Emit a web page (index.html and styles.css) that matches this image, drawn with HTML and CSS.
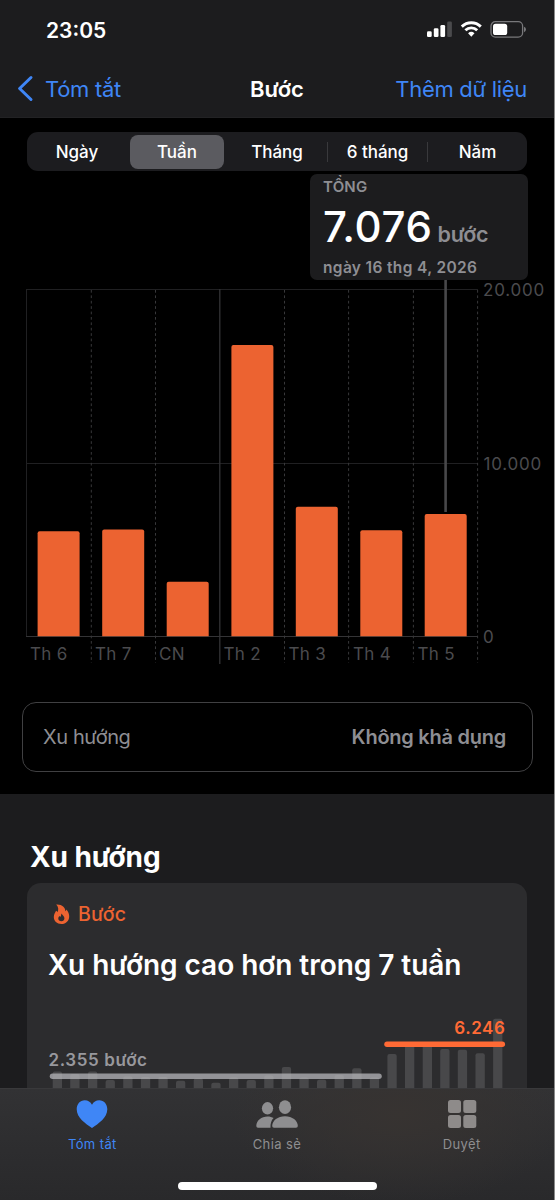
FILE: index.html
```html
<!DOCTYPE html>
<html lang="vi">

<head>
    <meta charset="UTF-8">
    <meta name="viewport" content="width=device-width, initial-scale=1.0">
    <title>Bước</title>
    <link rel="stylesheet" href="styles.css">
</head>

<body>
    <div class="phone">
        <header class="header">
            <!-- Status bar -->
            <div class="status-bar">
                <span class="time">23:05</span>
                <svg class="status-icons" width="100" height="18" viewBox="0 0 100 18">
                    <g fill="#fff">
                        <rect x="0" y="10.3" width="4.7" height="5.7" rx="1.3" />
                        <rect x="6.8" y="7.3" width="4.7" height="8.7" rx="1.3" />
                        <rect x="13.4" y="4" width="4.7" height="12" rx="1.3" />
                        <rect x="20.2" y="0.5" width="4.7" height="15.5" rx="1.3" fill="#4a4a4c" />
                    </g>
                    <g fill="none" stroke="#fff" stroke-width="2.9">
                        <path d="M34.8 5.6a13.7 13.7 0 0 1 19 0" />
                        <path d="M38.4 9.3a8.5 8.5 0 0 1 11.8 0" />
                    </g>
                    <path d="M41.1 12.2a4.8 4.8 0 0 1 6.4 0L44.3 15.8z" fill="#fff" />
                    <rect x="64" y="0.7" width="31.6" height="15.4" rx="4.4" fill="none" stroke="#78787b" stroke-width="1.3" />
                    <rect x="66" y="2.7" width="14.2" height="11.4" rx="2.6" fill="#fff" />
                    <path d="M97 5.8q2 .8 2 2.7t-2 2.7z" fill="#78787b" />
                </svg>
            </div>

            <!-- Navigation -->
            <nav class="nav-bar">
                <a class="nav-back">
                    <svg width="17" height="27" viewBox="0 0 17 27">
                        <path d="M14 2.5L2.6 13.5L14 24.5" fill="none" stroke="#3f86f6" stroke-width="3" stroke-linecap="round" stroke-linejoin="round" />
                    </svg>
                    <span>Tóm tắt</span>
                </a>
                <h1>Bước</h1>
                <a class="nav-add">Thêm dữ liệu</a>
            </nav>
        </header>

        <main class="chart-section">
            <div class="segments">
                <span class="segment">Ngày</span>
                <span class="segment active">Tuần</span>
                <span class="segment">Tháng</span>
                <span class="segment divided">6 tháng</span>
                <span class="segment divided">Năm</span>
            </div>

            <div class="chart">
                <div class="tooltip">
                    <div class="tooltip-label">TỔNG</div>
                    <div class="tooltip-value"><strong>7.076</strong> <span>bước</span></div>
                    <div class="tooltip-date">ngày 16 thg 4, 2026</div>
                </div>
                <!-- Weekly bar chart -->
                <svg class="week-chart" width="554" height="396" viewBox="0 280 554 396">
                    <g stroke="#202022" stroke-width="1">
                        <path d="M26 289.5H478M26 463.5H478" />
                        <path d="M26.5 289V636" />
                        <path d="M219.8 289V664" stroke="#333335" stroke-width="1.3" />
                        <path d="M26 636.5H478" stroke="#343436" />
                    </g>
                    <g stroke="#38383a" stroke-width="1" stroke-dasharray="2.7 2.7">
                        <path d="M91.3 290V663M155.5 290V663M284.5 290V663M348.6 290V663M413.4 290V663M477.6 290V663" />
                    </g>
                    <path d="M445.6 280V512" stroke="#48484a" stroke-width="2.6" />
                    <g fill="#ec6331">
                        <path d="M37.6 636.3V533.2q0-2 2-2h38q2 0 2 2V636.3z" />
                        <path d="M102.2 636.3V531.5q0-2 2-2h38q2 0 2 2V636.3z" />
                        <path d="M166.7 636.3V583.7q0-2 2-2h38q2 0 2 2V636.3z" />
                        <path d="M231.4 636.3V347q0-2 2-2h38q2 0 2 2V636.3z" />
                        <path d="M295.8 636.3V508.7q0-2 2-2h38q2 0 2 2V636.3z" />
                        <path d="M360.3 636.3V532.3q0-2 2-2h38q2 0 2 2V636.3z" />
                        <path d="M424.7 636.3V516q0-2 2-2h38q2 0 2 2V636.3z" />
                    </g>
                    <g class="axis-text">
                        <text x="30" y="660.4">Th 6</text>
                        <text x="95" y="660.4">Th 7</text>
                        <text x="159" y="660.4">CN</text>
                        <text x="223.5" y="660.4">Th 2</text>
                        <text x="288.5" y="660.4">Th 3</text>
                        <text x="353" y="660.4">Th 4</text>
                        <text x="417.5" y="660.4">Th 5</text>
                        <g class="axis-values">
                            <text x="483" y="296">20.000</text>
                            <text x="483.5" y="469.7">10.000</text>
                            <text x="483" y="643">0</text>
                        </g>
                    </g>
                </svg>
            </div>

            <div class="trend-row">
                <span>Xu hướng</span>
                <strong>Không khả dụng</strong>
            </div>
        </main>

        <section class="trends">
            <h2>Xu hướng</h2>
            <div class="card">
                <div class="card-label">
                    <svg width="17" height="21" viewBox="0 0 17 21">
                        <path d="M3.2 .6C9 .2 12.2 3.3 12.4 7.2C13 6.8 13.3 6.2 13.3 5.4C15.2 7.3 16.2 9.8 16.2 12.2C16.2 16.8 13 20 8.4 20C3.9 20 .8 17.1 .8 13C.8 9.9 2.5 8.3 3 6.7C3.9 7 4.3 7.6 4.5 8.3C5.9 5.6 5.4 2.7 3.2 .6z" fill="#ec6331" />
                        <path d="M8.2 9.4C10 11 11.4 12.5 11.4 14.3C11.4 16.1 10.1 17.3 8.4 17.3C6.6 17.3 5.3 16.2 5.3 14.5C5.3 13.3 5.9 12.5 6.5 12C6.8 12.3 7 12.6 7.2 13C8 12 8.4 10.8 8.2 9.4z" fill="#2c2c2e" />
                    </svg>
                    <span>Bước</span>
                </div>
                <h3>Xu hướng cao hơn trong 7 tuần</h3>
                <!-- Trend chart, runs on under the tab bar -->
                <svg class="trend-chart" width="500" height="82" viewBox="27 1006 500 82">
                    <g fill="#48484a">
                        <rect x="52.7" y="1071.5" width="9.3" height="30" rx="2" />
                        <rect x="70.2" y="1074" width="9.3" height="30" rx="2" />
                        <rect x="88" y="1071.5" width="9.3" height="30" rx="2" />
                        <rect x="105.6" y="1080" width="9.3" height="30" rx="2" />
                        <rect x="123.2" y="1076.5" width="9.3" height="30" rx="2" />
                        <rect x="140.9" y="1077" width="9.3" height="30" rx="2" />
                        <rect x="158.4" y="1077" width="9.3" height="30" rx="2" />
                        <rect x="176" y="1080.7" width="9.3" height="30" rx="2" />
                        <rect x="193.7" y="1078.5" width="9.3" height="30" rx="2" />
                        <rect x="211.3" y="1082.7" width="9.3" height="30" rx="2" />
                        <rect x="229" y="1077.5" width="9.3" height="30" rx="2" />
                        <rect x="246.6" y="1080" width="9.3" height="30" rx="2" />
                        <rect x="264.2" y="1075.5" width="9.3" height="30" rx="2" />
                        <rect x="281.8" y="1067" width="9.3" height="30" rx="2" />
                        <rect x="299.4" y="1077.5" width="9.3" height="30" rx="2" />
                        <rect x="317" y="1079.8" width="9.3" height="30" rx="2" />
                        <rect x="334.6" y="1075" width="9.3" height="30" rx="2" />
                        <rect x="352.2" y="1068.3" width="9.3" height="30" rx="2" />
                        <rect x="369.8" y="1077.5" width="9.3" height="30" rx="2" />
                        <rect x="387.4" y="1054" width="9.3" height="40" rx="2" />
                        <rect x="405" y="1045" width="9.3" height="50" rx="2" />
                        <rect x="422.7" y="1045" width="9.3" height="50" rx="2" />
                        <rect x="440.2" y="1049" width="9.3" height="50" rx="2" />
                        <rect x="457.8" y="1049.7" width="9.3" height="50" rx="2" />
                        <rect x="475.5" y="1053.3" width="9.3" height="50" rx="2" />
                        <rect x="493.1" y="1018.7" width="9.3" height="80" rx="2" />
                    </g>
                    <path d="M52.5 1076.2H379" stroke="#b4b4b8" stroke-opacity=".76" stroke-width="5.5" stroke-linecap="round" />
                    <path d="M387 1044.2H502.3" stroke="#ff6a35" stroke-width="5.5" stroke-linecap="round" />
                    <text class="trend-before" x="48.5" y="1065.5">2.355 bước</text>
                    <text class="trend-after" x="505.5" y="1033.7" text-anchor="end">6.246</text>
                </svg>
            </div>
        </section>

        <!-- Tab bar -->
        <footer class="tab-bar">
            <div class="tabs">
                <a class="tab active">
                    <svg width="44" height="30" viewBox="0 0 44 30">
                        <path d="M22 29C15.5 24.5 6.7 18.7 6.7 10.2C6.7 5.1 10.1 1.2 14.7 1.2C18 1.2 20.5 2.9 22 5.7C23.5 2.9 26 1.2 29.3 1.2C33.9 1.2 37.3 5.1 37.3 10.2C37.3 18.7 28.5 24.5 22 29z" fill="#3f86f6" />
                    </svg>
                    <span>Tóm tắt</span>
                </a>
                <a class="tab">
                    <svg width="44" height="30" viewBox="0 0 44 30">
                        <g fill="#8e8e90">
                            <ellipse cx="12.5" cy="9.3" rx="5.6" ry="6.2" />
                            <path d="M1.3 27C1.3 21.5 6.5 17.5 12.5 17.5C14.9 17.5 17 18.1 18.6 19C16.3 21.2 15.3 24.6 15.5 28.8H3Q1.3 28.8 1.3 27z" />
                            <ellipse cx="30" cy="8.2" rx="6.1" ry="6.9" />
                            <path d="M17.2 27C17.2 21.7 22.8 17.3 30 17.3S42.8 21.7 42.8 27Q42.8 28.8 41 28.8H19Q17.2 28.8 17.2 27z" />
                        </g>
                    </svg>
                    <span>Chia sẻ</span>
                </a>
                <a class="tab">
                    <svg width="44" height="30" viewBox="0 0 44 30">
                        <g fill="#8e8b8a">
                            <rect x="8" y="1" width="13" height="13" rx="2.5" />
                            <rect x="23.3" y="1" width="13" height="13" rx="2.5" />
                            <rect x="8" y="16" width="13" height="13" rx="2.5" />
                            <rect x="23.3" y="16" width="13" height="13" rx="2.5" />
                        </g>
                    </svg>
                    <span>Duyệt</span>
                </a>
            </div>
            <div class="home-indicator"></div>
        </footer>
    </div>
</body>

</html>
```
FILE: styles.css
```css
* {
  box-sizing: border-box;
}
body {
  margin: 0;
  background-color: #000;
  color: #fff;
  font-family: Inter, "Noto Sans", sans-serif;
}
h1, h2, h3 {
  margin: 0;
}
svg {
  display: block;
}
.phone {
  display: flex;
  flex-direction: column;
  width: 555px;
  height: 1200px;
  overflow: hidden;
  border-right: 1px solid #8a8a8a;
}

/* Header */
.header {
  height: 118px;
  background-color: #1c1c1e;
  border-bottom: 1px solid #222224;
}
.status-bar {
  display: flex;
  justify-content: space-between;
  align-items: center;
  height: 60px;
  padding: 0 27px 0 46px;
}
.time {
  font-size: 21px;
  font-weight: 600;
}
.nav-bar {
  display: grid;
  grid-template-columns: 1fr auto 1fr;
  align-items: center;
  height: 57px;
  padding: 0 27px;
  font-size: 22px;
  letter-spacing: -0.3px;
}
.nav-bar h1 {
  font-size: 22px;
  font-weight: 600;
  letter-spacing: 0;
}
.nav-back {
  display: flex;
  align-items: center;
  gap: 11px;
  margin-left: -10px;
  color: #3f86f6;
}
.nav-add {
  color: #3f86f6;
  text-align: right;
}

/* Range picker */
.chart-section {
  height: 676px;
  background-color: #000;
}
.segments {
  display: grid;
  grid-template-columns: repeat(5, 1fr);
  align-items: center;
  width: 500px;
  height: 39px;
  margin: 14px 0 0 27px;
  border-radius: 11px;
  background-color: #1c1c1f;
}
.segment {
  font-size: 17px;
  font-weight: 500;
  line-height: 34px;
  text-align: center;
}
.segment.active {
  width: 94px;
  justify-self: center;
  border-radius: 8px;
  background-color: #5b5b60;
}
.segment.divided {
  line-height: 20px;
  border-left: 1px solid #39393c;
}

/* Chart */
.chart {
  position: relative;
  padding-top: 109px;
}
.tooltip {
  position: absolute;
  top: 3px;
  left: 310px;
  width: 218px;
  height: 106px;
  padding: 4px 13px;
  border-radius: 7px;
  background-color: #1c1c1e;
  color: #8e8e93;
  font-weight: 600;
}
.tooltip-label {
  font-size: 15px;
  line-height: 18px;
  letter-spacing: 0.2px;
}
.tooltip-value {
  height: 62px;
  line-height: 62px;
  font-size: 21.5px;
  letter-spacing: -0.3px;
  white-space: nowrap;
}
.tooltip-value strong {
  color: #fff;
  font-size: 42px;
  font-weight: 500;
  letter-spacing: 0.6px;
}
.tooltip-date {
  font-size: 15.5px;
  line-height: 20px;
  letter-spacing: 0.35px;
}
.axis-text {
  fill: #4b4b4e;
  font-size: 17px;
  letter-spacing: 0.3px;
}
.axis-values {
  letter-spacing: 0.8px;
}

.trend-row {
  display: flex;
  justify-content: space-between;
  align-items: center;
  width: 511px;
  height: 70px;
  margin: 26px 0 0 22px;
  padding: 0 26px 0 20px;
  border: 1px solid #404042;
  border-radius: 14px;
  color: #8e8e93;
  font-size: 20px;
  letter-spacing: -0.4px;
}
.trend-row strong {
  font-weight: 600;
  letter-spacing: -0.25px;
}

/* Trends */
.trends {
  height: 294px;
  padding: 46px 27px 0;
  background-color: #1c1c1e;
}
.trends h2 {
  height: 43px;
  padding-left: 3px;
  font-size: 28px;
  font-weight: 700;
  line-height: 34px;
  letter-spacing: -0.1px;
}
.card {
  height: 205px;
  border-radius: 14px 14px 0 0;
  background-color: #2c2c2e;
}
.card-label {
  display: flex;
  align-items: center;
  gap: 8px;
  height: 62px;
  padding-left: 26px;
  color: #ec6331;
  font-size: 19.5px;
  font-weight: 500;
  letter-spacing: 0.2px;
}
.card h3 {
  height: 61px;
  padding-left: 21px;
  font-size: 28px;
  font-weight: 600;
  line-height: 40px;
  letter-spacing: -0.04px;
  white-space: nowrap;
}
.trend-before,
.trend-after {
  font-size: 17px;
  font-weight: 600;
  letter-spacing: 0.6px;
}
.trend-before {
  fill: #98989d;
}
.trend-after {
  fill: #ff6a35;
}

/* Tab bar */
.tab-bar {
  height: 112px;
  border-top: 1px solid #39393b;
  background: radial-gradient(ellipse 170px 90px at 400px 25px, #373331, transparent), linear-gradient(#323234, #29292b);
}
.tabs {
  display: grid;
  grid-template-columns: repeat(3, 1fr);
  height: 93px;
  padding-top: 10px;
}
.tab {
  display: flex;
  flex-direction: column;
  align-items: center;
  gap: 6px;
  color: #8e8e90;
  font-size: 13px;
  line-height: 18px;
  letter-spacing: 0.4px;
}
.tab.active {
  color: #3f86f6;
}
.home-indicator {
  width: 199px;
  height: 8px;
  margin: 0 auto;
  border-radius: 4px;
  background-color: #fff;
}
```
